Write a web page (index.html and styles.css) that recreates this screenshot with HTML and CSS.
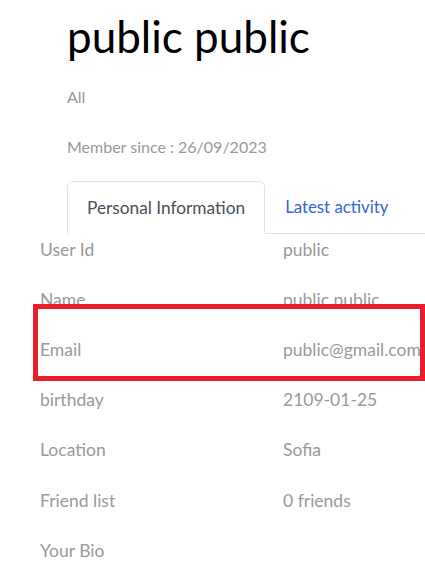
FILE: index.html
```html
<!DOCTYPE html>
<html>
<head>
<meta charset="utf-8">
<link rel="stylesheet" href="styles.css">
</head>
<body>
<div class="page">
  <header class="head">
    <h1 class="title">public public</h1>
    <p class="meta">All</p>
    <p class="meta">Member since : 26/09/2023</p>
  </header>
  <ul class="tabs">
    <li class="tab active">Personal Information</li>
    <li class="tab link">Latest activity</li>
  </ul>
  <div class="rows">
    <div class="row"><span class="label">User Id</span><span class="value">public</span></div>
    <div class="row"><span class="label">Name</span><span class="value">public public</span></div>
    <div class="row"><span class="label">Email</span><span class="value">public@gmail.com</span></div>
    <div class="row"><span class="label">birthday</span><span class="value">2109-01-25</span></div>
    <div class="row"><span class="label">Location</span><span class="value">Sofia</span></div>
    <div class="row"><span class="label">Friend list</span><span class="value">0 friends</span></div>
    <div class="row"><span class="label">Your Bio</span><span class="value"></span></div>
  </div>
  <div class="highlight"></div>
</div>
</body>
</html>
```
FILE: styles.css
```css
html, body {
  margin: 0;
  padding: 0;
  background: #fff;
}
body {
  font-family: Lato, "Open Sans", sans-serif;
  overflow: hidden;
}
.page {
  position: relative;
  width: 425px;
  height: 568px;
  overflow: hidden;
}
.head {
  padding: 10px 0 0 67px;
}
.title {
  margin: 0;
  font-size: 44px;
  font-weight: 400;
  line-height: 52px;
  color: #000;
}
.meta {
  margin: 0;
  height: 50px;
  line-height: 50px;
  font-size: 16px;
  color: #999;
}
.meta:first-of-type {
  margin-top: 10px;
}
.tabs {
  list-style: none;
  margin: 9px 0 0 67px;
  padding: 0;
  display: flex;
  border-bottom: 1px solid #dee2e6;
  height: 52px;
}
.tab {
  height: 52px;
  line-height: 52px;
  font-size: 17.3px;
  padding: 0 19px;
  box-sizing: border-box;
  margin-bottom: -1px;
  white-space: nowrap;
}
.tab.active {
  border: 1px solid #dee2e6;
  border-bottom-color: #fff;
  border-radius: 6px 6px 0 0;
  background: #fff;
  color: #495057;
  height: 53px;
}
.tab.link {
  color: #3366d6;
  padding-left: 20px;
  font-size: 16.8px;
}
.rows {
  padding-left: 40px;
  margin-top: -10px;
}
.row {
  display: grid;
  grid-template-columns: 243px 1fr;
  height: 50.2px;
  align-items: center;
  font-size: 17.5px;
  color: #999;
  white-space: nowrap;
}
.highlight {
  position: absolute;
  left: 33px;
  top: 304px;
  width: 392px;
  height: 77px;
  box-sizing: border-box;
  border: 5px solid #e81f2a;
}
```
